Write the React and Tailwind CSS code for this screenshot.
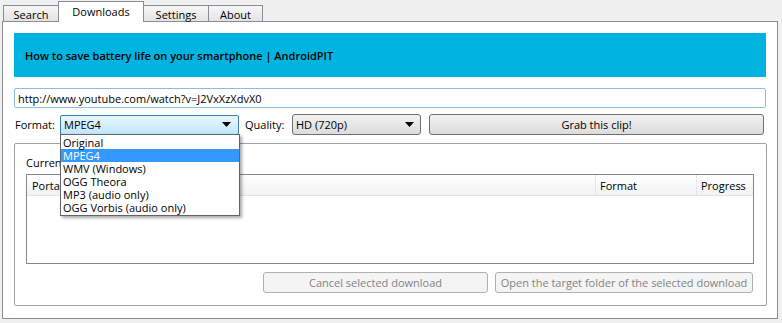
export default function App() {
  const formats = ["Original", "MPEG4", "WMV (Windows)", "OGG Theora", "MP3 (audio only)", "OGG Vorbis (audio only)"];

  return (
    <div className="w-[782px] h-[323px] bg-[#f0f0f0] font-['Open_Sans',sans-serif] text-[11px] leading-[15px] text-black overflow-hidden pl-[2px] pr-[4px] whitespace-nowrap">
      {/* Tabs */}
      <div className="flex h-[21px] items-end pl-px">
        <div className="w-[56px] h-[16px] border border-b-0 border-[#898c95] bg-gradient-to-b from-[#f7f7f7] to-[#e3e3e3] flex items-center justify-center pt-px">
          Search
        </div>
        <div className="relative z-10 w-[86px] h-[21px] -mb-px -ml-px border border-b-0 border-[#898c95] bg-white flex items-center justify-center pb-[2px]">
          Downloads
        </div>
        <div className="w-[66px] h-[16px] -ml-px border border-b-0 border-[#898c95] bg-gradient-to-b from-[#f7f7f7] to-[#e3e3e3] flex items-center justify-center pt-px">
          Settings
        </div>
        <div className="w-[55px] h-[16px] -ml-px border border-b-0 border-[#898c95] bg-gradient-to-b from-[#f7f7f7] to-[#e3e3e3] flex items-center justify-center pt-px">
          About
        </div>
      </div>

      {/* Panel */}
      <div className="h-[298px] border border-[#898c95] bg-white pl-[11px] pr-[11px] pt-[11px] flex flex-col">
        <div className="h-[44px] bg-[#00b4df] flex items-center pl-[11px] font-semibold">
          How to save battery life on your smartphone | AndroidPIT
        </div>

        <div className="mt-[11px] h-[20px] border border-[#8ebbe6] rounded-[2px] flex items-center pl-[3px]">
          http://www.youtube.com/watch?v=J2VxXzXdvX0
        </div>

        <div className="mt-[6px] h-[21px] flex items-center">
          <span className="w-[46px] pl-px">Format:</span>
          <div className="relative w-[179px] h-[20px]">
            <div className="h-full border border-[#3c7fb1] rounded-[2px] bg-gradient-to-b from-[#eaf6fd] to-[#bee6fd] flex items-center pl-[3px]">
              <span className="flex-1">MPEG4</span>
              <svg width="9" height="5" viewBox="0 0 9 5" className="mr-[7px]">
                <path d="M0 0H9L4.5 5Z" fill="#000" />
              </svg>
            </div>
            {/* Open dropdown */}
            <div className="absolute left-0 top-[19px] z-20 w-[180px] border border-[#646464] bg-white shadow-[2px_2px_3px_rgba(0,0,0,0.35)] py-[1px]">
              {formats.map((f) => (
                <div
                  key={f}
                  className={
                    f === "MPEG4"
                      ? "h-[13px] leading-[13px] pl-[2px] bg-[#3399ff] text-white"
                      : "h-[13px] leading-[13px] pl-[2px]"
                  }
                >
                  {f}
                </div>
              ))}
            </div>
          </div>
          <span className="ml-[6px] w-[47px]">Quality:</span>
          <div className="w-[129px] h-[21px] border border-[#707070] rounded-[3px] bg-gradient-to-b from-[#f2f2f2] to-[#dcdcdc] flex items-center pl-[3px]">
            <span className="flex-1">HD (720p)</span>
            <svg width="9" height="5" viewBox="0 0 9 5" className="mr-[6px]">
              <path d="M0 0H9L4.5 5Z" fill="#000" />
            </svg>
          </div>
          <div className="ml-[8px] flex-1 h-[21px] border border-[#707070] rounded-[3px] bg-gradient-to-b from-[#f2f2f2] to-[#dcdcdc] flex items-center justify-center mr-[2px]">
            Grab this clip!
          </div>
        </div>

        {/* Group box */}
        <div className="mt-[8px] h-[163px] mr-[-1px] border border-[#a0a0a0] rounded-[2px] pl-[11px] pr-[12px] flex flex-col">
          <div className="h-[30px] flex items-end pb-[4px]">Current downloads</div>
          <div className="h-[90px] border border-[#828790] flex flex-col">
            <div className="h-[21px] flex bg-gradient-to-b from-white to-[#f1f2f4] border-b border-[#e5e5e5]">
              <div className="flex-1 flex items-center pl-[5px] border-r border-[#e5e5e5]">Portal</div>
              <div className="w-[101px] flex items-center pl-[4px] border-r border-[#e5e5e5]">Format</div>
              <div className="w-[56px] flex items-center pl-[4px]">Progress</div>
            </div>
          </div>
          <div className="mt-[8px] mr-px flex justify-end gap-[7px]">
            <div className="w-[225px] h-[21px] border border-[#adb2b5] rounded-[3px] bg-[#f4f4f4] text-[#838383] flex items-center justify-center">
              Cancel selected download
            </div>
            <div className="w-[258px] h-[21px] border border-[#adb2b5] rounded-[3px] bg-[#f4f4f4] text-[#838383] flex items-center justify-center">
              Open the target folder of the selected download
            </div>
          </div>
        </div>
      </div>
    </div>
  );
}
